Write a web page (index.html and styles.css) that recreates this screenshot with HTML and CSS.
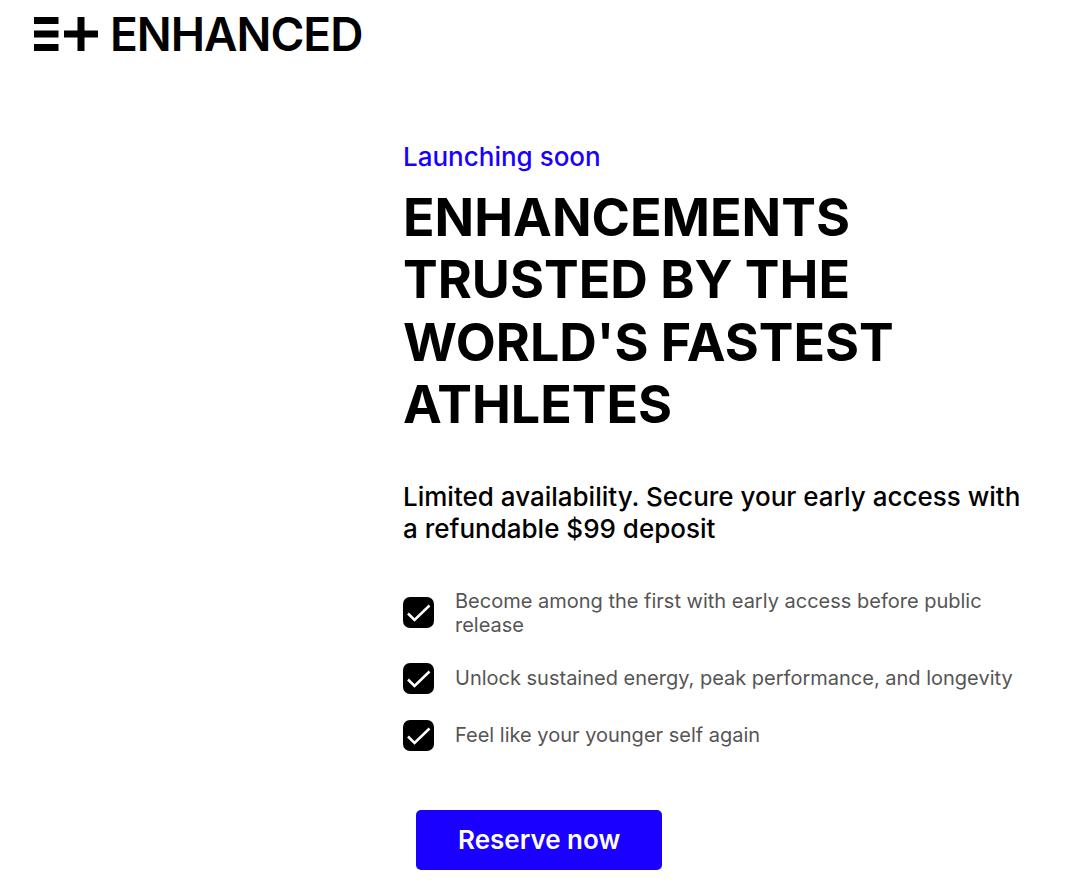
FILE: index.html
```html
<!DOCTYPE html>
<html lang="en">

<head>
    <meta charset="UTF-8">
    <meta name="viewport" content="width=device-width, initial-scale=1.0">
    <title>Enhanced</title>
    <link rel="stylesheet" href="styles.css">
</head>

<body>
    <header class="site-header">
        <a href="#" class="logo">
            <svg class="logo-mark" viewBox="0 0 64 34" aria-hidden="true">
                <path d="M0 0h24.5v7H0zM0 13.5h24.5v7H0zM0 27h24.5v7H0zM43.5 0h7v13.5H64v7H50.5V34h-7V20.5H30v-7h13.5z" />
            </svg>
            <span>ENHANCED</span>
        </a>
    </header>

    <main class="hero">
        <p class="eyebrow">Launching soon</p>
        <h1>ENHANCEMENTS TRUSTED BY THE WORLD'S FASTEST ATHLETES</h1>
        <p class="subtitle">Limited availability. Secure your early access with a refundable $99 deposit</p>

        <ul class="benefits">
            <li>
                <svg class="check" viewBox="0 0 31 31" aria-hidden="true">
                    <rect width="31" height="31" rx="7" />
                    <path d="M5 16.5l6.5 6.5L26.5 8.5" />
                </svg>
                <span>Become among the first with early access before public release</span>
            </li>
            <li>
                <svg class="check" viewBox="0 0 31 31" aria-hidden="true">
                    <rect width="31" height="31" rx="7" />
                    <path d="M5 16.5l6.5 6.5L26.5 8.5" />
                </svg>
                <span>Unlock sustained energy, peak performance, and longevity</span>
            </li>
            <li>
                <svg class="check" viewBox="0 0 31 31" aria-hidden="true">
                    <rect width="31" height="31" rx="7" />
                    <path d="M5 16.5l6.5 6.5L26.5 8.5" />
                </svg>
                <span>Feel like your younger self again</span>
            </li>
        </ul>

        <button type="button" class="reserve">Reserve now</button>
    </main>
</body>

</html>
```
FILE: styles.css
```css
body {
    font-family: Inter, sans-serif;
    background-color: #fff;
    color: #000;
    margin: 0;
}

.site-header {
    padding: 4px 34px 0;
}

.logo {
    display: inline-flex;
    align-items: center;
    gap: 12px;
    color: #000;
    font-size: 46px;
    line-height: 60px;
    font-weight: 600;
    letter-spacing: -1px;
    text-decoration: none;
}

.logo-mark {
    width: 64px;
    height: 34px;
}

.hero {
    margin-left: 403px;
    padding: 77px 48px 12px 0;
}

.eyebrow {
    color: #1a00ff;
    font-size: 26px;
    line-height: 32px;
    font-weight: 500;
    margin: 0 0 14px;
}

h1 {
    font-size: 52px;
    line-height: 1.2;
    font-weight: 700;
    margin: 0;
}

.subtitle {
    font-size: 26px;
    line-height: 32px;
    font-weight: 500;
    margin: 44px 0;
}

.benefits {
    display: flex;
    flex-direction: column;
    gap: 26px;
    list-style: none;
    margin: 0;
    padding: 0;
}

.benefits li {
    display: flex;
    align-items: center;
    gap: 21px;
    color: #555;
    font-size: 20px;
    line-height: 24px;
}

.check {
    flex: none;
    width: 31px;
    height: 31px;
}

.check path {
    fill: none;
    stroke: #fff;
    stroke-width: 2.5;
}

.reserve {
    background-color: #1a00ff;
    color: #fff;
    border: none;
    border-radius: 5px;
    font-family: inherit;
    font-size: 26px;
    line-height: 32px;
    font-weight: 600;
    margin: 59px 0 0 13px;
    padding: 14px 42px;
    cursor: pointer;
}
```
